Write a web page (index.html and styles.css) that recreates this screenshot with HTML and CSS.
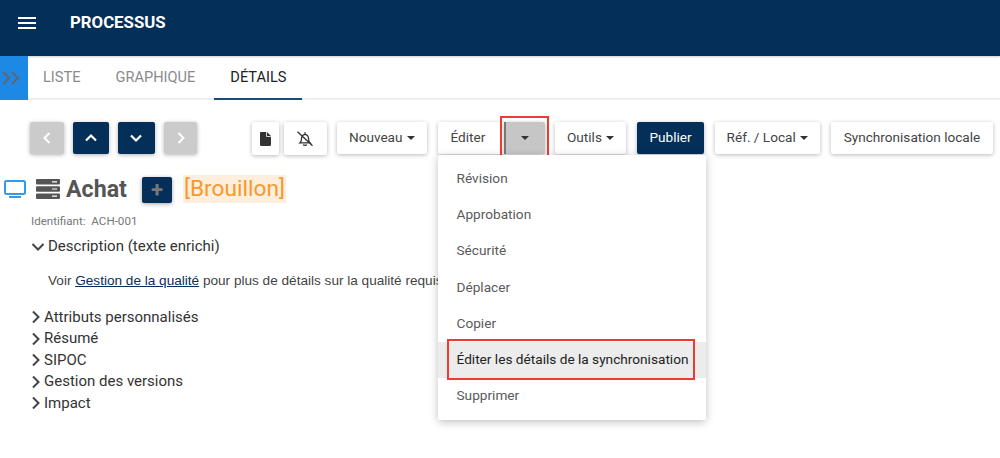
FILE: index.html
```html
<!DOCTYPE html>
<html lang="fr">
<head>
<meta charset="utf-8">
<title>Processus</title>
<link rel="stylesheet" href="styles.css">
</head>
<body>
<header class="topbar">
  <svg class="burger" width="18" height="14" viewBox="0 0 18 14"><path d="M0 2h18M0 7h18M0 12h18" stroke="#fff" stroke-width="1.800"/></svg>
  <span class="app-title">PROCESSUS</span>
</header>
<nav class="tabbar">
  <div class="side-toggle">
    <svg width="20" height="14" viewBox="0 0 20 14"><path d="M2 1l6 6-6 6M11 1l6 6-6 6" fill="none" stroke="#5f6670" stroke-width="2"/></svg>
  </div>
  <a class="tab">LISTE</a>
  <a class="tab">GRAPHIQUE</a>
  <a class="tab active">DÉTAILS</a>
</nav>
<section class="toolbar">
  <div class="nav-group">
    <button class="nav-btn off narrow"><svg width="10" height="12" viewBox="0 0 10 12"><path d="M7.500 1L2.500 6l5 5" fill="none" stroke="#fff" stroke-width="2"/></svg></button>
    <button class="nav-btn"><svg width="14" height="10" viewBox="0 0 14 10"><path d="M2 7.500l5-5 5 5" fill="none" stroke="#fff" stroke-width="2.200"/></svg></button>
    <button class="nav-btn"><svg width="14" height="10" viewBox="0 0 14 10"><path d="M2 2.500l5 5 5-5" fill="none" stroke="#fff" stroke-width="2.200"/></svg></button>
    <button class="nav-btn off narrow"><svg width="10" height="12" viewBox="0 0 10 12"><path d="M2.500 1l5 5-5 5" fill="none" stroke="#fff" stroke-width="2"/></svg></button>
  </div>
  <div class="actions">
    <button class="btn icon doc"><svg width="11" height="14" viewBox="0 0 11 14"><path d="M0 1.200C0 .5.500 0 1.200 0H7l4 4v8.800c0 .7-.5 1.200-1.200 1.200H1.200C.5 14 0 13.500 0 12.800z" fill="#333"/><path d="M6.500 0v4.500H11" fill="none" stroke="#fff" stroke-width=".8"/></svg></button>
    <button class="btn icon bell"><svg width="18" height="16" viewBox="0 0 18 16"><path d="M4 11.800c1-.8 1.400-2 1.400-3.500 0-2.700 1.400-4.600 3.600-4.900 2.200.3 3.600 2.200 3.600 4.900 0 1.500.4 2.700 1.400 3.500zM9 1.300v2.100M7.300 13.500c.3 1.200 3.100 1.200 3.400 0M1.500 .8l15 14" fill="none" stroke="#333" stroke-width="1.300"/></svg></button>
    <button class="btn">Nouveau<i class="caret"></i></button>
    <div class="split">
      <button class="btn split-main">Éditer</button>
      <button class="btn split-toggle"><i class="caret"></i></button>
      <span class="mark mark-toggle"></span>
      <div class="menu">
        <a class="menu-item">Révision</a>
        <a class="menu-item">Approbation</a>
        <a class="menu-item">Sécurité</a>
        <a class="menu-item">Déplacer</a>
        <a class="menu-item">Copier</a>
        <a class="menu-item hover">Éditer les détails de la synchronisation<span class="mark mark-item"></span></a>
        <a class="menu-item">Supprimer</a>
      </div>
    </div>
    <button class="btn mid">Outils<i class="caret"></i></button>
    <button class="btn primary">Publier</button>
    <button class="btn">Réf. / Local<i class="caret"></i></button>
    <button class="btn wide">Synchronisation locale</button>
  </div>
</section>
<main class="content">
  <div class="title-row">
    <svg class="monitor" width="22" height="18" viewBox="0 0 22 18"><path d="M2.500 1h17c.8 0 1.500.7 1.500 1.500v10c0 .8-.7 1.500-1.500 1.500h-17C1.700 14 1 13.300 1 12.500v-10C1 1.700 1.700 1 2.500 1z" fill="none" stroke="#2e9bf0" stroke-width="2"/><path d="M5 17h12" stroke="#2e9bf0" stroke-width="2"/></svg>
    <svg class="server" width="24" height="20" viewBox="0 0 24 20"><rect width="24" height="5.600" rx="1" fill="#555"/><rect y="7.200" width="24" height="5.600" rx="1" fill="#555"/><rect y="14.400" width="24" height="5.600" rx="1" fill="#555"/><path d="M16 2.800h5M16 10h5M16 17.200h5" stroke="#fff" stroke-width="1.200"/></svg>
    <h1 class="title">Achat</h1>
    <button class="plus">+</button>
    <span class="draft">[Brouillon]</span>
  </div>
  <div class="ident">Identifiant:&nbsp; ACH-001</div>
  <div class="section open"><svg width="14" height="10" viewBox="0 0 14 10"><path d="M1.500 2l5.500 5.500L12.500 2" fill="none" stroke="#444" stroke-width="2"/></svg>Description (texte enrichi)</div>
  <p class="rich">Voir <a class="link">Gestion de la qualité</a> pour plus de détails sur la qualité requise.</p>
  <ul class="sections">
    <li class="section"><svg width="10" height="14" viewBox="0 0 10 14"><path d="M2 1.500L7.500 7 2 12.500" fill="none" stroke="#444" stroke-width="2"/></svg>Attributs personnalisés</li>
    <li class="section"><svg width="10" height="14" viewBox="0 0 10 14"><path d="M2 1.500L7.500 7 2 12.500" fill="none" stroke="#444" stroke-width="2"/></svg>Résumé</li>
    <li class="section"><svg width="10" height="14" viewBox="0 0 10 14"><path d="M2 1.500L7.500 7 2 12.500" fill="none" stroke="#444" stroke-width="2"/></svg>SIPOC</li>
    <li class="section"><svg width="10" height="14" viewBox="0 0 10 14"><path d="M2 1.500L7.500 7 2 12.500" fill="none" stroke="#444" stroke-width="2"/></svg>Gestion des versions</li>
    <li class="section"><svg width="10" height="14" viewBox="0 0 10 14"><path d="M2 1.500L7.500 7 2 12.500" fill="none" stroke="#444" stroke-width="2"/></svg>Impact</li>
  </ul>
</main>
</body>
</html>
```
FILE: styles.css
```css
* { box-sizing: border-box; }
html, body { margin: 0; padding: 0; }
body {
  width: 1000px;
  height: 458px;
  overflow: hidden;
  background: #fff;
  font-family: Roboto, "Liberation Sans", sans-serif;
  color: #333;
}
.topbar {
  height: 56px;
  background: #032f59;
  display: flex;
  align-items: flex-start;
  padding: 15px 0 0 18px;
  box-shadow: 0 1px 2px rgba(0,0,0,.2);
}
.burger { margin-top: .5px; }
.app-title {
  margin-left: 34px;
  color: #fff;
  font-size: 16.800px;
  font-weight: 700;
  line-height: 15px;
}
.tabbar {
  height: 44px;
  display: flex;
  border-bottom: 2px solid #eee;
}
.side-toggle {
  width: 28px;
  height: 44px;
  background: #1e88e5;
  display: flex;
  align-items: center;
  padding-left: 1px;
  margin-right: 1px;
}
.tab {
  height: 44px;
  padding: 0 14px;
  margin-right: 7px;
  line-height: 43px;
  font-size: 14.600px;
  color: #8a8a8a;
}
.tab.active {
  margin-left: -2px;
  padding: 0 15px 0 16px;
  color: #222;
  border-bottom: 2px solid #1c4a78;
}
.toolbar {
  display: flex;
  padding: 22px 7px 0 30px;
}
.nav-group { display: flex; gap: 9px; height: 32px; }
.nav-btn {
  width: 36.600px;
  height: 32px;
  padding: 0;
  border: 0;
  border-radius: 2px;
  background: #032f59;
  display: flex;
  align-items: center;
  justify-content: center;
  box-shadow: 0 1px 4px rgba(0,0,0,.3);
}
.nav-btn.narrow { width: 33.600px; }
.nav-btn.off { background: #cbcbcb; }
.actions { margin-left: 54.600px; display: flex; gap: 11px; height: 32px; }
.btn {
  height: 32px;
  padding: 0 12px 2px;
  border: 0;
  border-radius: 2px;
  background: #fff;
  color: #444;
  font: 13.600px/30px Roboto, "Liberation Sans", sans-serif;
  white-space: nowrap;
  box-shadow: 0 1px 4px rgba(0,0,0,.28);
}
.btn.mid { padding-left: 12.500px; padding-right: 12.500px; }
.btn.wide { padding-left: 13px; padding-right: 13px; }
.btn.icon { display: flex; align-items: center; justify-content: center; padding: 0; }
.btn.doc { width: 27px; margin-right: -6px; height: 33px; }
.btn.bell { width: 43px; margin-right: -1px; height: 33px; }
.btn.primary { background: #032f59; color: #fff; }
.caret {
  display: inline-block;
  margin-left: 4px;
  vertical-align: 2px;
  border-top: 4.500px solid #333;
  border-left: 4.500px solid transparent;
  border-right: 4.500px solid transparent;
}
.split { position: relative; display: flex; margin-right: -1px; }
.split-main { width: 66px; padding: 0 13px 2px; text-align: left; border-radius: 2px 0 0 2px; }
.split-toggle {
  width: 41px;
  padding: 0 0 2px;
  background: #c6c6c6;
  border-left: 2px solid #777;
  border-radius: 0 2px 2px 0;
  text-align: center;
}
.split-toggle .caret { margin-left: 0; }
.mark { position: absolute; border: 2px solid #ee3a33; pointer-events: none; }
.mark-toggle { left: 62px; top: -6px; width: 49px; height: 45px; }
.menu {
  position: absolute;
  left: 0;
  top: 33px;
  z-index: 5;
  width: 268px;
  height: 265px;
  padding-top: 6px;
  background: #fff;
  border-radius: 2px;
  box-shadow: 0 2px 8px rgba(0,0,0,.25);
}
.menu-item {
  position: relative;
  display: block;
  height: 36.200px;
  padding-left: 19px;
  font-size: 13.650px;
  line-height: 34.500px;
  color: #5a5a5a;
  white-space: nowrap;
}
.menu-item.hover { background: #ececec; color: #222; }
.mark-item { left: 9px; top: -3px; width: 248px; height: 41px; }
.content { padding: 0 0 0 4px; }
.title-row { display: flex; align-items: center; height: 34px; margin-top: 18px; }
.server { margin-left: 10px; }
.title {
  margin: 0 0 0 6px;
  font-size: 23.200px;
  font-weight: 700;
  line-height: 30px;
  color: #555;
}
.plus {
  width: 30px;
  height: 26px;
  margin: 1px 0 0 15px;
  padding: 0;
  border: 0;
  border-radius: 2px;
  background: #032f59;
  color: #777;
  font: 700 22px/26px Roboto, "Liberation Sans", sans-serif;
  box-shadow: 0 1px 4px rgba(0,0,0,.35);
}
.draft {
  margin-left: 11px;
  padding: 0 1px;
  font-size: 22.700px;
  line-height: 28px;
  color: #f7992c;
  background: #fdeedd;
}
.ident {
  margin: 8px 0 0 27px;
  font-size: 11.600px;
  line-height: 14px;
  color: #777;
}
.section {
  display: flex;
  align-items: center;
  gap: 3px;
  font-size: 15px;
  line-height: 21.500px;
  color: #333;
}
.section.open { margin: 8px 0 0 27px; height: 22px; gap: 3px; }
.rich {
  margin: 13px 0 0 44px;
  font-size: 13.600px;
  line-height: 20px;
  color: #444;
  font-family: "Liberation Sans", Arial, sans-serif;
}
.link { color: #032f59; text-decoration: underline; }
.sections { list-style: none; margin: 15.500px 0 0 27px; padding: 0; }
```
